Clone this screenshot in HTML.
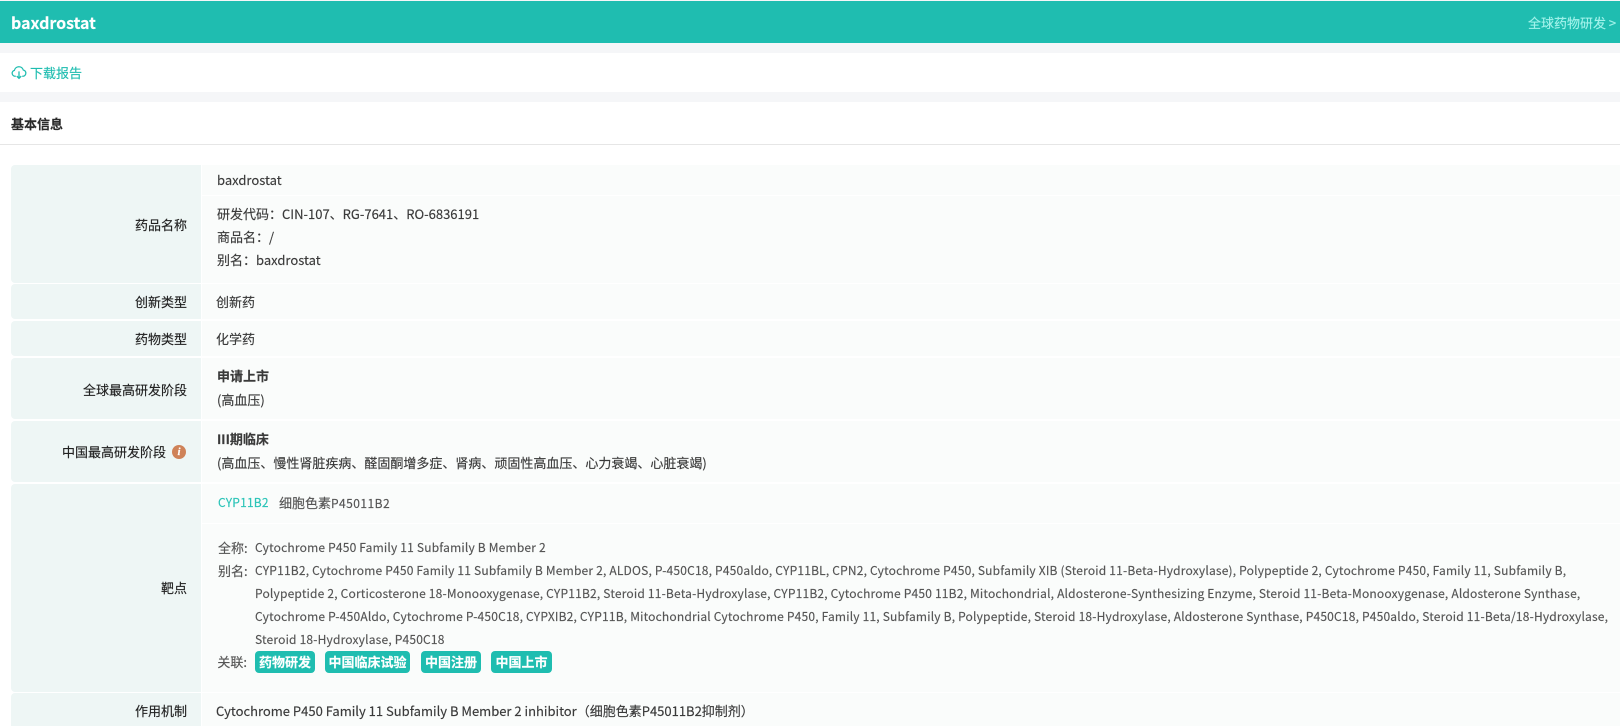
<!DOCTYPE html>
<html lang="zh"><head><meta charset="utf-8"><title>baxdrostat</title>
<style>
*{margin:0;padding:0;box-sizing:border-box}
html,body{width:1620px;height:726px;overflow:hidden;background:#f5f6f8}
body{position:relative;font-family:"Noto Sans CJK SC","Liberation Sans",sans-serif;font-size:13px;color:#3a3a3a;-webkit-text-stroke:.15px}
.a{position:absolute}
.t{position:absolute;white-space:nowrap;line-height:20px}
.lab{position:absolute;left:11px;width:190px;background:#eef6f5;border-radius:4px 0 0 4px}
.val{position:absolute;left:202px;width:1418px;background:#fafcfb}
.l{position:absolute;left:11px;width:176px;text-align:right;color:#222;line-height:20px;white-space:nowrap}
.s{color:#555;font-size:12px}
.e{letter-spacing:.19px}
.tag{position:absolute;top:651px;height:22px;background:#1fbdb0;color:#fff;border-radius:4px;font-size:13px;font-weight:700;line-height:22px;text-align:center;white-space:nowrap}
</style></head><body>
<div class="a" style="left:0;top:1px;width:1620px;height:42px;background:#1fbdb0"></div>
<div class="t" style="left:11px;top:12px;font-size:16px;font-weight:700;color:#fff">baxdrostat</div>
<div class="t" style="left:1528px;top:13px;color:#a2f2ea">全球药物研发 &gt;</div>
<div class="a" style="left:0;top:53px;width:1620px;height:39px;background:#fff"></div>
<svg class="a" style="left:11px;top:65px" width="16" height="15" viewBox="0 0 15 14" fill="none" stroke="#1fbdb0" stroke-width="1.2"><path d="M4.5 10.5H3.6A2.8 2.8 0 0 1 3.2 5 4.3 4.3 0 0 1 11.5 4.6 3 3 0 0 1 11.4 10.5H10.5"/><path d="M7.5 6V12.5M5.4 10.4 7.5 12.5 9.6 10.4"/></svg>
<div class="t" style="left:30px;top:63px;color:#1fbdb0">下载报告</div>
<div class="a" style="left:0;top:102px;width:1620px;height:624px;background:#fff"></div>
<div class="a" style="left:0;top:144px;width:1620px;height:1px;background:#e6e6e6"></div>
<div class="t" style="left:11px;top:114px;font-weight:700;color:#2a2a2a">基本信息</div>

<div class="lab" style="top:165px;height:118px"></div>
<div class="val" style="top:165px;height:30px"></div>
<div class="val" style="top:196px;height:87px"></div>
<div class="l" style="top:215px">药品名称</div>
<div class="t" style="left:217px;top:170px">baxdrostat</div>
<div class="t" style="left:217px;top:204px">研发代码：CIN-107、RG-7641、RO-6836191</div>
<div class="t" style="left:217px;top:227px">商品名：/</div>
<div class="t" style="left:217px;top:250px">别名：baxdrostat</div>

<div class="lab" style="top:284px;height:35px"></div>
<div class="val" style="top:284px;height:35px"></div>
<div class="l" style="top:292px">创新类型</div>
<div class="t" style="left:216px;top:292px">创新药</div>

<div class="lab" style="top:321px;height:35px"></div>
<div class="val" style="top:321px;height:35px"></div>
<div class="l" style="top:329px">药物类型</div>
<div class="t" style="left:216px;top:329px">化学药</div>

<div class="lab" style="top:358px;height:61px"></div>
<div class="val" style="top:358px;height:61px"></div>
<div class="l" style="top:380px">全球最高研发阶段</div>
<div class="t" style="left:217px;top:366px;font-weight:700">申请上市</div>
<div class="t" style="left:217px;top:390px">(高血压)</div>

<div class="lab" style="top:421px;height:61px"></div>
<div class="val" style="top:421px;height:61px"></div>
<div class="l" style="top:442px;width:155px">中国最高研发阶段</div>
<div class="a" style="left:172px;top:445px;width:14px;height:14px;border-radius:50%;background:#cf8258;color:#fff;font:italic 700 11px/14px 'Liberation Serif',serif;text-align:center">i</div>
<div class="t" style="left:217px;top:429px;font-weight:700">III期临床</div>
<div class="t" style="left:217px;top:453px">(高血压、慢性肾脏疾病、醛固酮增多症、肾病、顽固性高血压、心力衰竭、心脏衰竭)</div>

<div class="lab" style="top:484px;height:208px"></div>
<div class="val" style="top:484px;height:39px"></div>
<div class="val" style="top:524px;height:168px"></div>
<div class="l" style="top:578px">靶点</div>
<div class="t s e" style="left:218px;top:493px;color:#2cc4b8">CYP11B2</div>
<div class="t s" style="left:279px;top:493px"><span style="font-size:13px">细胞色素</span><span style="letter-spacing:.45px">P45011B2</span></div>
<div class="t s" style="left:218px;top:538px;font-size:13px">全称:</div>
<div class="t s e" style="left:255px;top:538px">Cytochrome P450 Family 11 Subfamily B Member 2</div>
<div class="t s" style="left:218px;top:561px;font-size:13px">别名:</div>
<div class="t s e" style="left:255px;top:561px">CYP11B2, Cytochrome P450 Family 11 Subfamily B Member 2, ALDOS, P-450C18, P450aldo, CYP11BL, CPN2, Cytochrome P450, Subfamily XIB (Steroid 11-Beta-Hydroxylase), Polypeptide 2, Cytochrome P450, Family 11, Subfamily B,</div>
<div class="t s e" style="left:255px;top:584px">Polypeptide 2, Corticosterone 18-Monooxygenase, CYP11B2, Steroid 11-Beta-Hydroxylase, CYP11B2, Cytochrome P450 11B2, Mitochondrial, Aldosterone-Synthesizing Enzyme, Steroid 11-Beta-Monooxygenase, Aldosterone Synthase,</div>
<div class="t s e" style="left:255px;top:607px">Cytochrome P-450Aldo, Cytochrome P-450C18, CYPXIB2, CYP11B, Mitochondrial Cytochrome P450, Family 11, Subfamily B, Polypeptide, Steroid 18-Hydroxylase, Aldosterone Synthase, P450C18, P450aldo, Steroid 11-Beta/18-Hydroxylase,</div>
<div class="t s e" style="left:255px;top:630px">Steroid 18-Hydroxylase, P450C18</div>
<div class="t s" style="left:190px;top:652px;width:57px;text-align:right;font-size:13px">关联:</div>
<div class="tag" style="left:255px;width:60px">药物研发</div>
<div class="tag" style="left:325px;width:85px">中国临床试验</div>
<div class="tag" style="left:421px;width:60px">中国注册</div>
<div class="tag" style="left:491px;width:61px">中国上市</div>

<div class="lab" style="top:693px;height:33px;border-radius:4px 0 0 0"></div>
<div class="val" style="top:693px;height:33px"></div>
<div class="l" style="top:701px">作用机制</div>
<div class="t" style="left:216px;top:701px">Cytochrome P450 Family 11 Subfamily B Member 2 inhibitor（细胞色素P45011B2抑制剂）</div>
</body></html>
